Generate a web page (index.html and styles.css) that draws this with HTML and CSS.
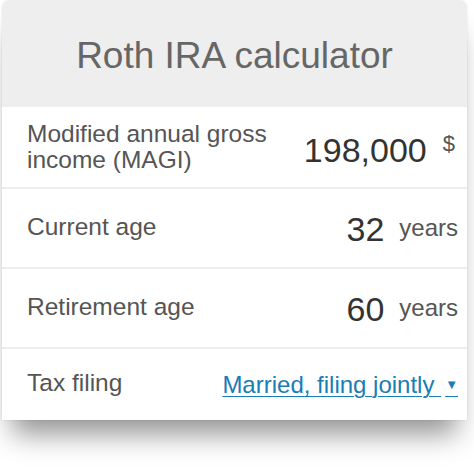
FILE: index.html
```html
<!DOCTYPE html>
<html>
<head>
<meta charset="utf-8">
<link rel="stylesheet" href="styles.css">
</head>
<body>
<div class="card">
  <div class="header">Roth IRA calculator</div>
  <div class="row row-tall">
    <div class="label">Modified annual gross<br>income (MAGI)</div>
    <div class="value"><span class="num">198,000</span><span class="unit unit-cur">$</span></div>
  </div>
  <div class="row">
    <div class="label">Current age</div>
    <div class="value"><span class="num">32</span><span class="unit">years</span></div>
  </div>
  <div class="row">
    <div class="label">Retirement age</div>
    <div class="value"><span class="num">60</span><span class="unit">years</span></div>
  </div>
  <div class="row row-last">
    <div class="label">Tax filing</div>
    <a class="select" href="#">Married, filing jointly <span class="caret">▼</span></a>
  </div>
</div>
</body>
</html>
```
FILE: styles.css
```css
html, body {
  margin: 0;
  padding: 0;
  background: #fff;
}
body {
  font-family: "Liberation Sans", Arial, sans-serif;
  width: 474px;
  height: 474px;
  overflow: hidden;
}
.card {
  margin: 0 7px 0 2px;
  background: #fff;
  border-radius: 8px 8px 0 0;
  box-shadow: 0 0 2px rgba(0, 0, 0, 0.12), 0 24px 26px -10px rgba(0, 0, 0, 0.42);
  overflow: hidden;
}
.header {
  background: #eeeeee;
  height: 107px;
  display: flex;
  align-items: center;
  justify-content: center;
  font-size: 37px;
  color: #666;
  padding-top: 4px;
  box-sizing: border-box;
}
.row {
  height: 80px;
  display: flex;
  align-items: center;
  justify-content: space-between;
  padding: 0 9px 3px 25px;
  border-top: 2px solid #eeeeee;
  box-sizing: border-box;
}
.row-tall {
  border-top: none;
  height: 80px;
  padding-bottom: 0;
}
.row-last {
  height: 73px;
}
.label {
  font-size: 24.5px;
  line-height: 26px;
  color: #555;
}
.value {
  display: flex;
  align-items: center;
}
.num {
  font-size: 34px;
  color: #333;
  margin-top: 6px;
}
.unit {
  font-size: 24px;
  color: #555;
  margin-left: 15px;
  margin-top: 3px;
}
.unit-cur {
  font-size: 22px;
  margin-left: 16px;
  margin-right: 3px;
  margin-top: 0;
  margin-bottom: 6px;
}
.select {
  font-size: 24px;
  color: #1a7db5;
  text-decoration: underline;
  text-underline-offset: 3px;
  text-decoration-thickness: 1px;
  margin-top: 4px;
}
.caret {
  font-size: 13px;
  position: relative;
  top: -4px;
  margin-left: 4px;
}
```
